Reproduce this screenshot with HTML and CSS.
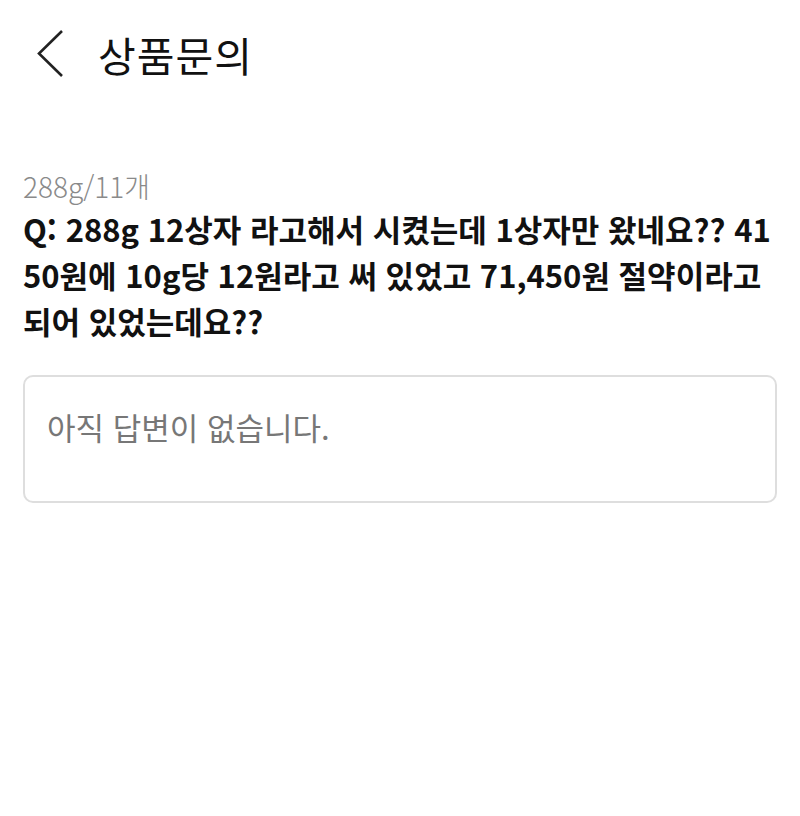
FILE: index.html
```html
<!DOCTYPE html>
<html lang="ko">

<head>
    <meta charset="UTF-8">
    <meta name="viewport" content="width=device-width, initial-scale=1.0">
    <title>상품문의</title>
    <link rel="stylesheet" href="styles.css">
</head>

<body>
    <header class="top-bar">
        <div class="back-button">
            <svg width="30" height="50" viewBox="0 0 30 50">
                <polyline points="26,2 3,24.5 26,47" fill="none" stroke="#222" stroke-width="2.6" />
            </svg>
        </div>
        <h1 class="page-title">상품문의</h1>
    </header>

    <main class="inquiry">
        <p class="option-name">288g/11개</p>
        <p class="question">Q: 288g 12상자 라고해서 시켰는데 1상자만 왔네요?? 4150원에 10g당 12원라고 써 있었고 71,450원 절약이라고 되어 있었는데요??</p>
        <div class="answer-box">
            <p class="answer-empty">아직 답변이 없습니다.</p>
        </div>
    </main>
</body>

</html>
```

FILE: styles.css
```css
body {
    font-family: "Noto Sans CJK KR", "Noto Sans", sans-serif;
    margin: 0;
    padding: 0;
    background-color: #ffffff;
    color: #111;
}

.top-bar {
    display: flex;
    align-items: center;
    height: 108px;
    padding-left: 36px;
    box-sizing: border-box;
}

.back-button {
    display: flex;
    align-items: center;
    width: 30px;
    height: 50px;
    margin-right: 32px;
}

.page-title {
    margin: 0;
    font-size: 41px;
    font-weight: 400;
    letter-spacing: 1px;
}

.inquiry {
    padding: 58px 23px 0 23px;
}

.option-name {
    margin: 0;
    font-size: 28px;
    font-weight: 300;
    color: #8a8a8a;
    line-height: 40px;
}

.question {
    margin: 0;
    font-size: 31px;
    font-weight: 700;
    line-height: 46px;
    word-break: break-all;
}

.answer-box {
    margin-top: 31px;
    height: 128px;
    border: 2px solid #dedede;
    border-radius: 10px;
    box-sizing: border-box;
    padding: 0 22px;
}

.answer-empty {
    margin: 0;
    padding-top: 28px;
    font-size: 31px;
    color: #777;
    line-height: 44px;
}
```
